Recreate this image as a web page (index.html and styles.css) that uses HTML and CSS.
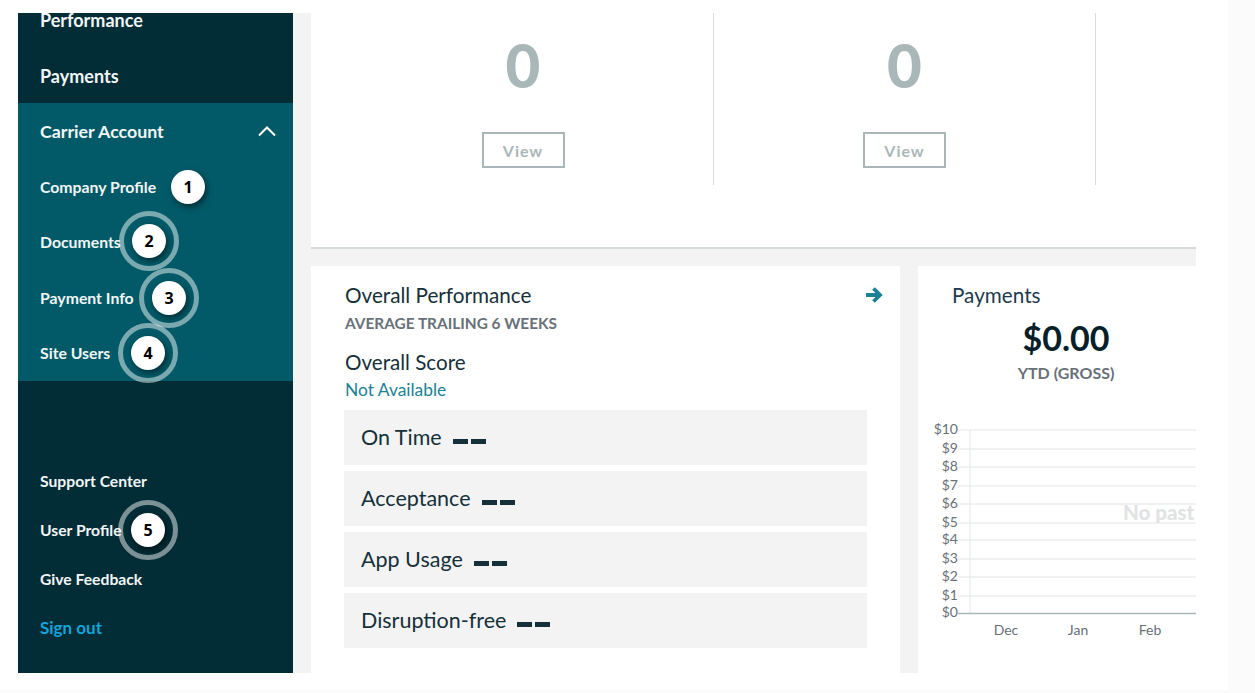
FILE: index.html
```html
<!DOCTYPE html>
<html lang="en">
<head>
<meta charset="utf-8">
<title>Carrier Account</title>
<link rel="stylesheet" href="styles.css">
</head>
<body>
<div class="page">
<div class="frame">
  <nav class="sidebar">
    <div class="nav-top">
      <a class="nav-item nav-first">Performance</a>
      <a class="nav-item">Payments</a>
    </div>
    <div class="nav-active">
      <div class="nav-item nav-head">Carrier Account
        <svg class="chevron" width="20" height="12" viewBox="0 0 20 12"><path d="M2 10.500 10 2.500l8 8" fill="none" stroke="#fff" stroke-width="2"/></svg>
      </div>
      <a class="nav-sub">Company Profile<span class="badge badge-1">1</span></a>
      <a class="nav-sub">Documents<span class="badge badge-2 ring">2</span></a>
      <a class="nav-sub">Payment Info<span class="badge badge-3 ring">3</span></a>
      <a class="nav-sub">Site Users<span class="badge badge-4 ring">4</span></a>
    </div>
    <div class="nav-bottom">
      <a class="nav-low">Support Center</a>
      <a class="nav-low">User Profile<span class="badge badge-5 ring">5</span></a>
      <a class="nav-low">Give Feedback</a>
      <a class="nav-low nav-signout">Sign out</a>
    </div>
  </nav>
  <main class="content">
    <section class="summary">
      <div class="stat">
        <div class="stat-num">0</div>
        <button class="view-btn">View</button>
      </div>
      <div class="stat">
        <div class="stat-num">0</div>
        <button class="view-btn">View</button>
      </div>
    </section>
    <div class="cards">
      <section class="card perf">
        <div class="perf-head">
          <h2 class="card-title">Overall Performance</h2>
          <svg class="arrow" width="18" height="18" viewBox="0 0 18 18"><path d="M1 9h13M8.500 2.500 15 9l-6.500 6.500" fill="none" stroke="#1a8294" stroke-width="3.800"/></svg>
        </div>
        <div class="caption">AVERAGE TRAILING 6 WEEKS</div>
        <div class="score-title">Overall Score</div>
        <div class="score-val">Not Available</div>
        <div class="metric">On Time <span class="dash"><i></i><i></i></span></div>
        <div class="metric">Acceptance <span class="dash"><i></i><i></i></span></div>
        <div class="metric">App Usage <span class="dash"><i></i><i></i></span></div>
        <div class="metric">Disruption-free <span class="dash"><i></i><i></i></span></div>
      </section>
      <section class="card pay">
        <h2 class="card-title pay-title">Payments</h2>
        <div class="amount">$0.00</div>
        <div class="ytd">YTD (GROSS)</div>
        <svg class="chart" width="278" height="235" viewBox="0 -5 278 235">
          <g class="grid">
            <path d="M40 7H278M40 26H278M40 44H278M40 63H278M40 81H278M40 100H278M40 117H278M40 136H278M40 154H278M40 173H278"/>
            <path d="M52 7V190"/>
          </g>
          <path class="axis" d="M40 190.500H278"/>
          <g class="ylabels">
            <text x="40" y="11">$10</text><text x="40" y="30">$9</text><text x="40" y="48">$8</text><text x="40" y="67">$7</text><text x="40" y="85">$6</text><text x="40" y="104">$5</text><text x="40" y="121">$4</text><text x="40" y="140">$3</text><text x="40" y="158">$2</text><text x="40" y="177">$1</text><text x="40" y="194">$0</text>
          </g>
          <g class="xlabels">
            <text x="88" y="212">Dec</text><text x="160" y="212">Jan</text><text x="232" y="212">Feb</text>
          </g>
          <text class="nodata" x="205" y="97">No past</text>
        </svg>
      </section>
    </div>
  </main>
</div>
</div>
</body>
</html>
```
FILE: styles.css
```css
* { box-sizing: border-box; }
html, body { margin: 0; height: 100%; overflow: hidden; background: #fbfbfb; }
body { font-family: "Lato", "Noto Sans", sans-serif; color: #16303a; }
.page { width: 1228px; height: 690px; padding: 13px 0 0 18px; background: #fff; }
.frame { display: flex; width: 1178px; height: 660px; background: #f3f3f3; overflow: hidden; }

.sidebar { flex: 0 0 275px; display: flex; flex-direction: column; background: #022c36; color: #f2f6f6; font-weight: 700; }
.nav-top { height: 90px; overflow: hidden; }
.nav-item { display: flex; align-items: center; height: 55.500px; padding-left: 22px; font-size: 18px; }
.nav-first { margin-top: -20.500px; }
.nav-active { height: 277.500px; background: #025a68; }
.nav-head { justify-content: space-between; padding-right: 16px; font-size: 17.800px; }
.chevron { display: block; }
.nav-sub { position: relative; display: flex; align-items: center; height: 55.500px; padding-left: 22px; font-size: 15.800px; }
.nav-bottom { display: flex; flex-direction: column; padding-top: 75.500px; }
.nav-low { position: relative; display: flex; align-items: center; height: 49px; padding-left: 22px; font-size: 15.700px; }
.nav-signout { color: #14a3d8; font-size: 17px; }

.badge { position: absolute; top: 50%; width: 34px; height: 34px; margin-top: -17px; border-radius: 50%; background: #fff; color: #000; font: 700 16px/34px "Open Sans", sans-serif; text-align: center; box-shadow: 2px 3px 6px rgba(0,0,0,.5); }
.ring::after { content: ""; position: absolute; inset: -13px; border: 5px solid rgba(255,255,255,.48); border-radius: 50%; }
.badge-1 { left: 153px; margin-top: -16px; }
.badge-2 { left: 114px; margin-top: -18px; }
.badge-3 { left: 134px; margin-top: -16px; }
.badge-4 { left: 113px; }
.badge-5 { left: 113px; }

.content { flex: 0 0 885px; margin-left: 18px; display: flex; flex-direction: column; }
.summary { display: flex; height: 236px; padding-left: 22px; background: #fff; border-bottom: 2px solid #d5dbdb; }
.stat { width: 382px; height: 172px; display: flex; flex-direction: column; align-items: center; border-right: 1px solid #d5dbdb; }
.stat:first-child { width: 381px; }
.stat-num { margin-top: 19px; font-size: 60px; line-height: 66px; font-weight: 900; color: #aab7b8; }
.view-btn { margin-top: 34px; width: 83px; height: 36px; background: #fff; border: 2px solid #aab7b8; color: #aab7b8; font: 700 16px "Lato", sans-serif; letter-spacing: 1px; }

.cards { display: flex; gap: 18px; margin-top: 17px; flex: 1; min-height: 0; }
.card { background: #fff; height: 407px; }
.perf { flex: 0 0 589px; padding: 16px 33px 0 34px; }
.perf-head { display: flex; justify-content: space-between; align-items: center; height: 26px; }
.card-title { margin: 0; font-size: 20.700px; font-weight: 400; color: #16303a; }
.arrow { display: block; margin-right: -16px; }
.caption { margin-top: 5px; font-size: 15.400px; line-height: 20px; font-weight: 700; color: #687078; }
.score-title { margin-top: 15px; font-size: 20.600px; line-height: 28px; }
.score-val { margin-top: 2px; font-size: 17.400px; line-height: 24px; color: #1a8294; }
.metric { display: flex; align-items: center; height: 55px; margin: 0 0 6px -1px; padding: 0 0 2px 17px; background: #f3f3f3; font-size: 21.500px; }
.score-val + .metric { margin-top: 8px; }
.dash { display: inline-flex; gap: 3px; margin-left: 11px; margin-top: 10px; }
.dash i { display: block; width: 15px; height: 5px; background: #16303a; }

.pay { flex: 1; min-width: 0; position: relative; overflow: hidden; }
.pay-title { margin: 16px 0 0 34px; line-height: 26px; color: #1d3a4c; }
.amount { width: 296px; margin-top: 9px; text-align: center; font-size: 34px; line-height: 42px; font-weight: 700; color: #06202a; }
.ytd { width: 296px; margin-top: 4px; text-align: center; font-size: 16px; line-height: 20px; font-weight: 700; color: #687078; }
.chart { display: block; margin-top: 35px; }
.grid path { fill: none; stroke: #e2e6e6; stroke-width: 1; }
.axis { fill: none; stroke: #aab7b8; stroke-width: 1.500; }
.ylabels text { font-size: 14px; text-anchor: end; fill: #687078; }
.xlabels text { font-size: 14px; text-anchor: middle; fill: #687078; }
.nodata { font-size: 20.500px; font-weight: 900; fill: #dfe3e3; }
```
